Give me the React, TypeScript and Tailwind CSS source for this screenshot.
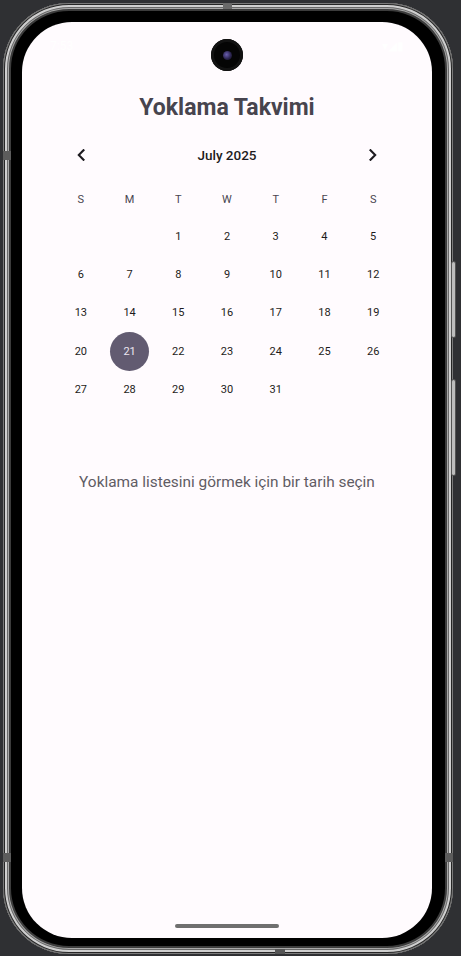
import React from "react";

const weekdays = ["S", "M", "T", "W", "T", "F", "S"];

function Chevron({ dir }: { dir: "left" | "right" }) {
  return (
    <svg width="10" height="12" viewBox="0 0 10 12" fill="none">
      <path
        d={dir === "left" ? "M7.5 1.2 L2.8 6 L7.5 10.8" : "M2.5 1.2 L7.2 6 L2.5 10.8"}
        stroke="#1d1b20"
        strokeWidth="2.1"
        strokeLinecap="square"
        strokeLinejoin="miter"
      />
    </svg>
  );
}

export default function App() {
  const cells: (number | null)[] = [null, null];
  for (let d = 1; d <= 31; d++) cells.push(d);
  while (cells.length % 7 !== 0) cells.push(null);

  return (
    <div className="w-[461px] h-[956px] bg-[#2f3033] pt-[3px] pl-[3px] overflow-hidden">
      <div className="relative w-[450px] h-[951px] rounded-[66px] bg-black pt-[19px] pb-[16px] pl-[19px] pr-[21px] shadow-[inset_0_0_0_1px_#7a7a7a,inset_0_0_0_2px_#262626,inset_0_0_0_4px_#cfcfcf,inset_0_0_0_5px_#6a6a6a,inset_0_0_0_6px_#a8a8a8,inset_0_0_0_8px_#3c3c3c]">
        {/* frame marks */}
        <div className="absolute left-[220px] top-0 w-[9px] h-[6px] bg-[#6a6a6a]" />
        <div className="absolute left-[272px] bottom-0 w-[10px] h-[5px] bg-[#555]" />
        <div className="absolute left-0 top-[148px] w-[8px] h-[9px] bg-[#5c5c5c]" />
        <div className="absolute left-0 top-[850px] w-[8px] h-[9px] bg-[#5c5c5c]" />
        <div className="absolute right-0 top-[850px] w-[8px] h-[9px] bg-[#5c5c5c]" />
        <div className="absolute right-[-2px] top-[259px] w-[3px] h-[75px] rounded-full bg-[#bdbdbd] shadow-[0_0_0_1px_#555]" />
        <div className="absolute right-[-2px] top-[377px] w-[3px] h-[95px] rounded-full bg-[#bdbdbd] shadow-[0_0_0_1px_#555]" />

        <div className="relative flex flex-col w-[410px] h-[916px] rounded-[50px] bg-[#fffbfe] overflow-hidden font-['Roboto',sans-serif]">
          {/* camera */}
          <div className="absolute left-[189px] top-[17px] w-[32px] h-[32px] rounded-full bg-[#050505] shadow-[inset_0_0_0_3px_#121212] flex items-center justify-center">
            <div className="w-[9px] h-[9px] rounded-full bg-[radial-gradient(circle_at_40%_40%,#6a5fb0_0%,#2c2550_55%,#0b0a14_100%)]" />
          </div>

          {/* status bar */}
          <div className="h-[46px] flex items-center justify-between px-[28px] pt-[2px] text-white text-[12px]">
            <span>7:53</span>
            <span>▾◢▮</span>
          </div>

          <h1 className="mt-[26px] text-center text-[23px] leading-[28px] font-bold text-[#47444e]">
            Yoklama Takvimi
          </h1>

          <div className="mt-[13px] mx-auto w-[341px] h-[40px] flex items-center">
            <div className="w-[48.7px] flex justify-center">
              <Chevron dir="left" />
            </div>
            <div className="flex-1 text-center text-[13.5px] font-medium text-[#1d1b20]">July 2025</div>
            <div className="w-[48.7px] flex justify-center">
              <Chevron dir="right" />
            </div>
          </div>

          <div className="mt-[7px] mx-auto w-[341px] h-[36px] grid grid-cols-7 items-center text-[11px] text-[#49454f]">
            {weekdays.map((w, i) => (
              <div key={i} className="text-center">
                {w}
              </div>
            ))}
          </div>

          <div className="mx-auto w-[341px] grid grid-cols-7 auto-rows-[38.25px] text-[11px] text-[#1d1b20]">
            {cells.map((d, i) => (
              <div key={i} className="flex items-center justify-center">
                {d === 21 ? (
                  <span className="shrink-0 w-[39px] h-[39px] rounded-full bg-[#625b71] text-[#ece6f0] flex items-center justify-center">
                    21
                  </span>
                ) : (
                  d ?? ""
                )}
              </div>
            ))}
          </div>

          <p className="mt-[61px] text-center text-[15.4px] leading-[24px] text-[#5f5c64]">
            Yoklama listesini görmek için bir tarih seçin
          </p>

          <div className="mt-auto mb-[10px] mx-auto w-[104px] h-[4px] rounded-full bg-[#6f6f6f]" />
        </div>
      </div>
    </div>
  );
}
